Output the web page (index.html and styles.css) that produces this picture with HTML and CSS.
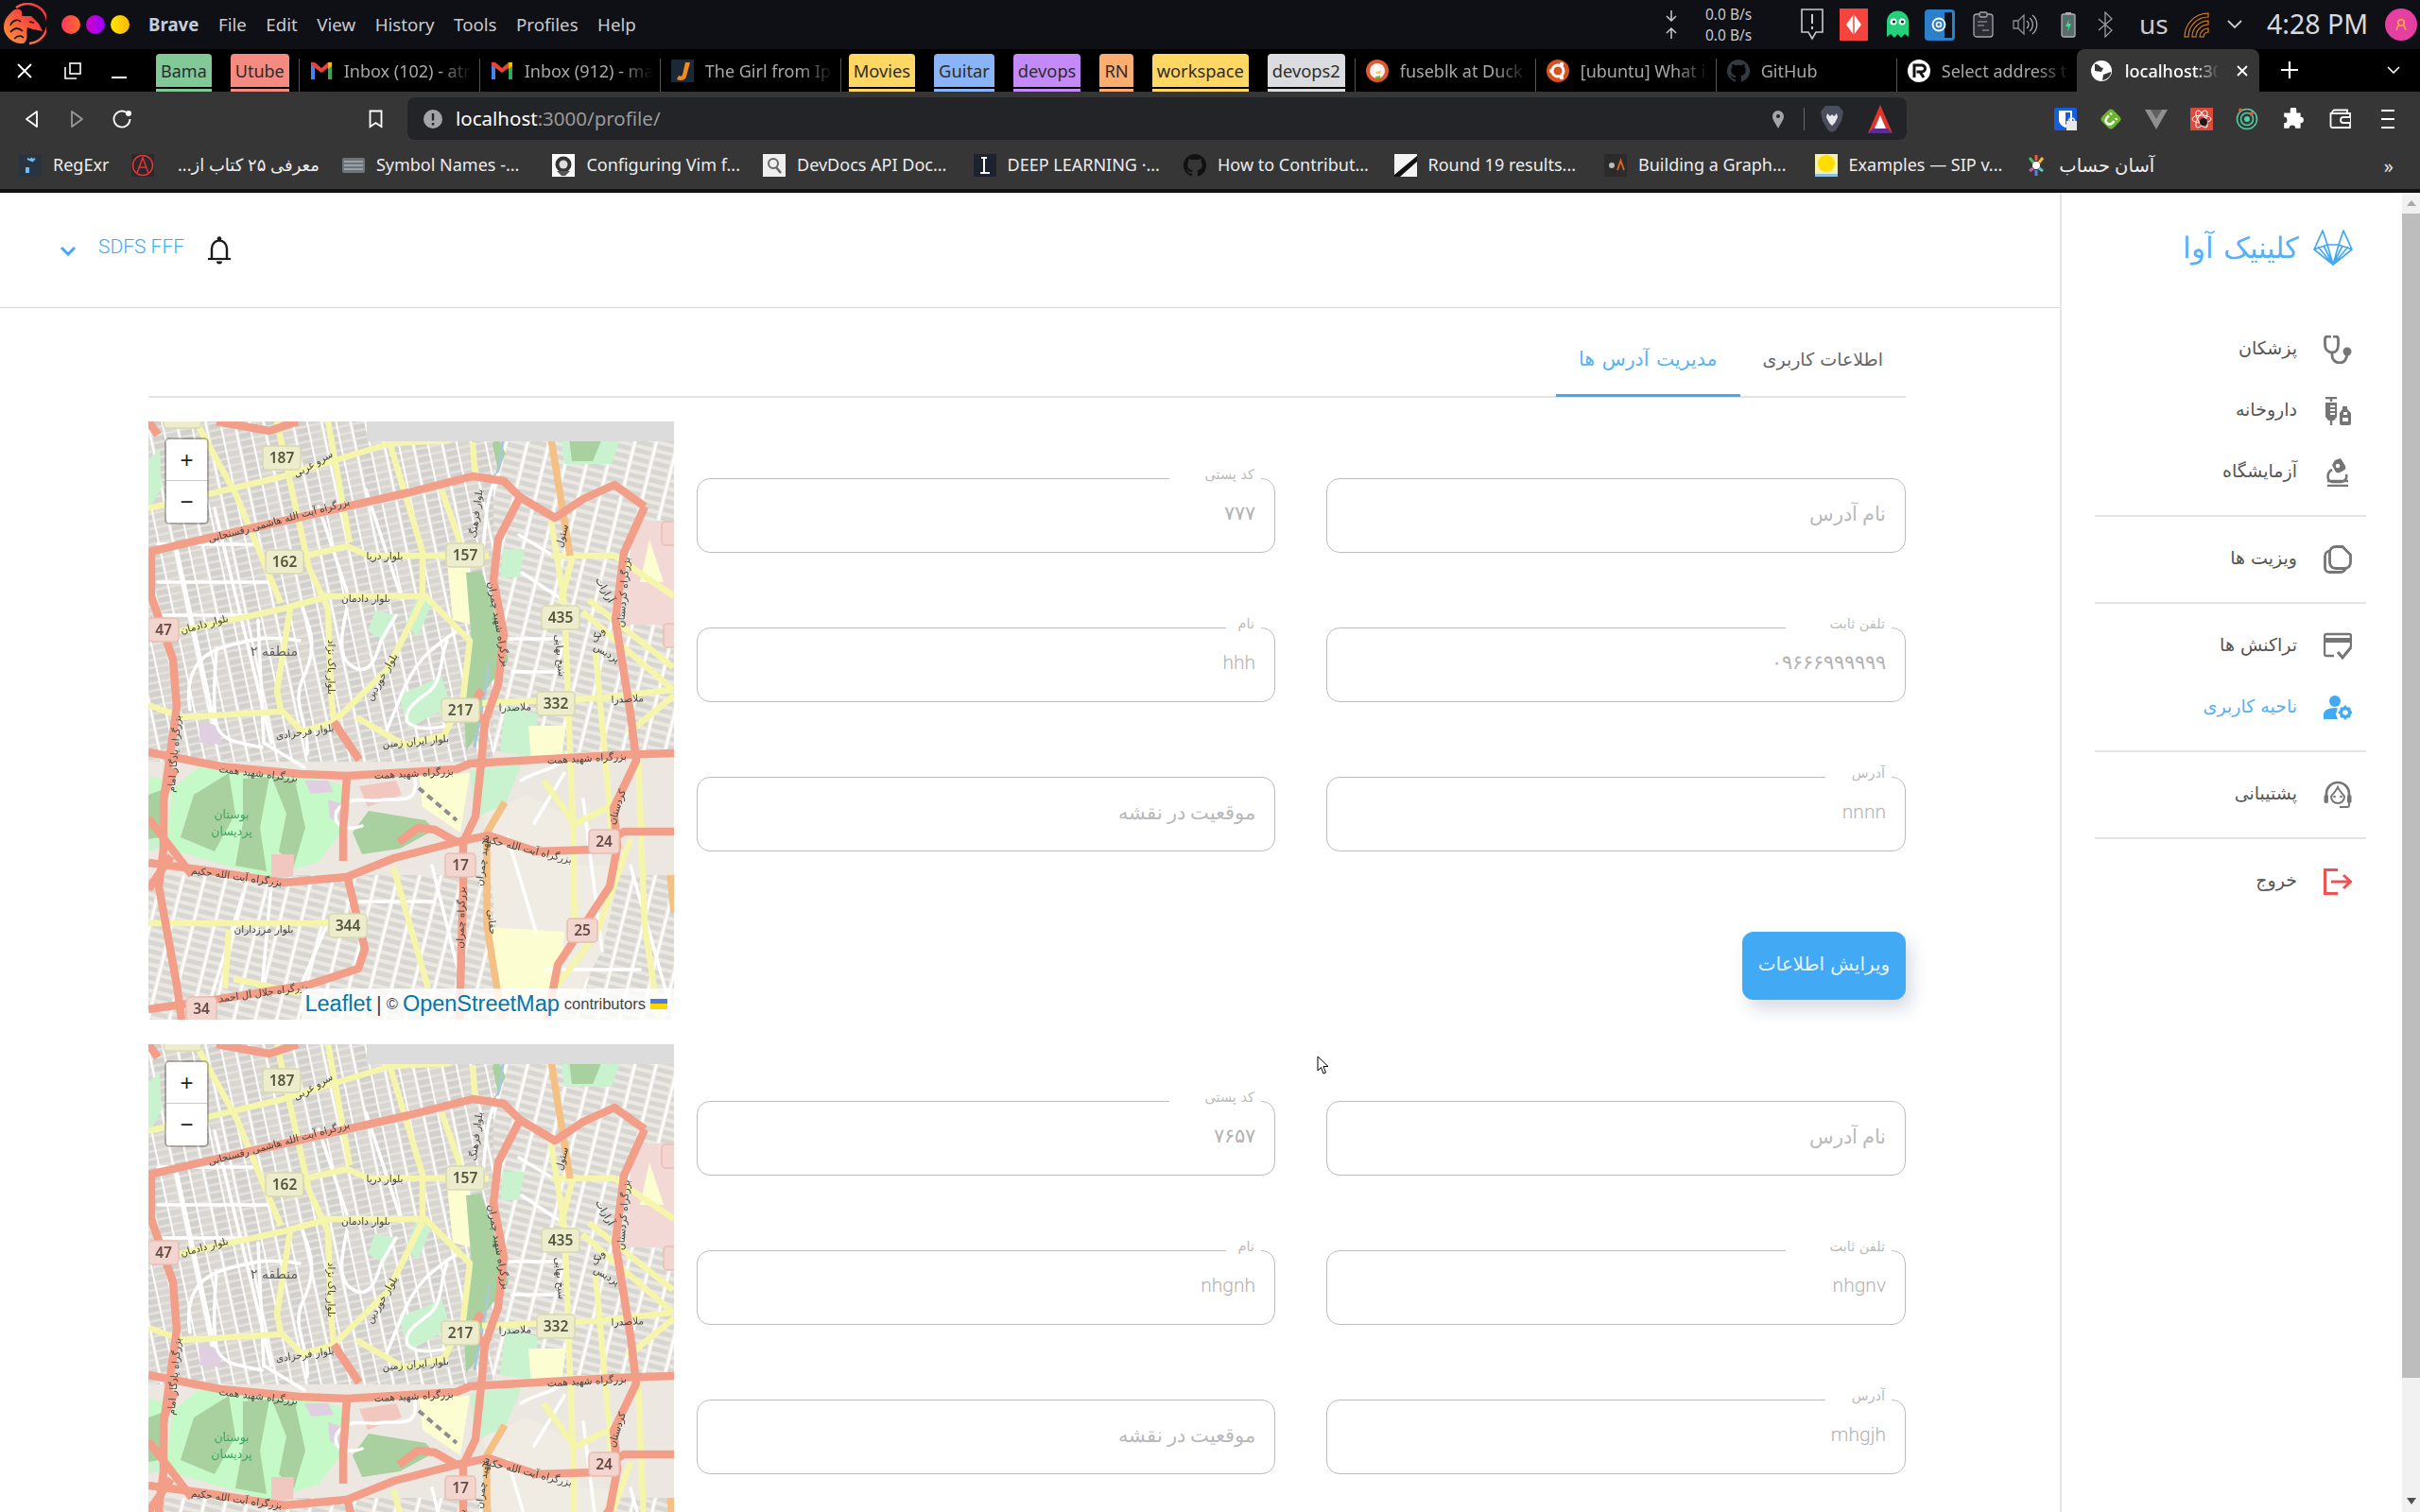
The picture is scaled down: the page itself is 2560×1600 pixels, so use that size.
FILE: index.html
```html
<!DOCTYPE html>
<html lang="en">
<head>
<meta charset="utf-8">
<title>localhost:3000/profile/</title>
<link rel="stylesheet" href="styles.css">
</head>
<body>
<svg class="defs" width="0" height="0" aria-hidden="true">
  <defs>
    <linearGradient id="dragon" x1="0" y1="1" x2="1" y2="0"><stop offset="0" stop-color="#ff9a3c"/><stop offset="1" stop-color="#f0203f"/></linearGradient>
    <pattern id="blocksA" width="30" height="8" patternUnits="userSpaceOnUse" patternTransform="rotate(-12)">
      <rect width="30" height="8" fill="#e6e3de"/>
      <rect x="1" y="1" width="12" height="5.5" fill="#d2d0cd"/>
      <rect x="15" y="1" width="12" height="5.5" fill="#d9d6d2"/>
      <rect x="13.2" width="1.8" height="8" fill="#fff"/>
      <rect x="28" width="2" height="8" fill="#fff"/>
    </pattern>
    <pattern id="blocksB" width="22" height="9" patternUnits="userSpaceOnUse" patternTransform="rotate(14)">
      <rect width="22" height="9" fill="#ebe8e2"/>
      <rect x="1" y="1" width="17" height="5" fill="#d8d6d2"/>
      <rect x="19.5" width="2.5" height="9" fill="#fff"/>
    </pattern>
    <symbol id="tehran" viewBox="0 0 556 633">
      <rect width="556" height="633" fill="#ece8e1"/>
      <rect width="365" height="360" fill="url(#blocksA)"/>
      <rect x="365" width="191" height="350" fill="url(#blocksB)"/>
      <rect y="480" width="556" height="153" fill="url(#blocksB)"/>
      <g class="land-green">
        <path d="M0,40 L12,30 L14,70 L0,95Z"/>
        <path d="M436,16 H500 L490,45 H440Z"/>
        <path d="M375,135 H398 L392,165 H372Z"/>
        <path d="M340,370 L395,362 L372,420 L345,415Z"/>
        <path d="M0,385 L22,395 L18,450 L0,455Z"/>
        <path d="M240,200 L262,205 L250,232 L232,222Z"/>
        <path d="M285,185 L300,192 L285,228 L272,215Z"/>
        <path d="M265,290 L310,270 L320,300 L275,325Z"/>
        <path d="M378,300 L412,310 L408,355 L372,350Z"/>
      </g>
      <path class="land-sand" d="M355,415 L400,395 L470,430 L430,520 L370,560Z"/>
      <path class="land-sand" d="M410,470 L500,470 L480,560 L440,633 L380,633Z"/>
      <path class="land-pink" d="M512,105 H556 V215 H505Z"/>
      <path class="land-pale" d="M530,125 L545,170 H520Z"/>
      <path class="land-pale" d="M316,150 H338 L342,215 L322,210Z"/>
      <path class="land-pale" d="M286,373 L340,372 L330,435 L290,408Z"/>
      <path class="land-pale" d="M402,322 H442 L436,362 H405Z"/>
      <path class="land-pale" d="M360,535 L440,540 L435,600 L375,610Z"/>
      <path class="land-park" d="M26,388 L53,366 L160,373 L206,385 L206,432 L180,466 L126,482 L30,455 L18,448Z"/>
      <path class="land-park" d="M0,375 L22,380 L16,445 L0,440Z"/>
      <g class="land-wood">
        <path d="M48,395 L85,372 L92,415 L70,455 L34,440Z"/>
        <path d="M100,378 L128,376 L118,430 L125,476 L92,470 L100,425Z"/>
        <path d="M130,375 L155,380 L166,430 L154,470 L138,455 L146,415Z"/>
        <path d="M216,435 L233,412 L293,422 L303,432 L266,452 L226,458Z"/>
        <path d="M0,395 L14,390 L12,440 L0,442Z"/>
        <path d="M336,160 L352,158 L362,186 L381,252 L356,285 L346,335 L336,348 L333,290 L342,235Z"/>
        <path d="M364,25 L368,15 L378,34 L370,52Z"/>
        <path d="M445,18 L480,18 L470,42 L448,42Z"/>
      </g>
      <path class="land-lilac" d="M165,380 H190 L196,392 L172,394Z"/>
      <path class="land-lilac" d="M190,400 L206,405 L204,425 L192,420Z"/>
      <path class="land-lilac" d="M53,320 H72 L78,342 L55,340Z"/>
      <path class="land-rose" d="M130,458 H154 L153,482 H130Z"/>
      <path class="land-rose" d="M223,386 L262,380 L268,395 L232,408Z"/>
      <path class="water" d="M378,12 C370,30 376,45 366,60"/>
      <path class="water" d="M360,255 C358,290 350,310 345,345"/>
      <path class="rail" d="M286,388 L326,422"/>
      <g class="street">
        <path d="M44,305 C38,268 52,246 82,238 S130,226 160,232"/>
        <path d="M72,240 C70,270 68,300 72,320 S100,340 120,345"/>
        <path d="M116,210 L122,340 L165,366"/>
        <path d="M163,198 C172,220 180,240 162,275 C152,300 170,320 168,352"/>
        <path d="M210,198 C204,225 200,248 214,258 S238,262 246,232 L262,205"/>
        <path d="M326,222 C300,240 284,250 268,288 L250,332"/>
        <path d="M316,232 C308,250 312,272 298,285 C280,298 270,306 274,318 C285,328 300,325 316,322"/>
        <path d="M199,413 C212,392 232,405 250,400 C272,400 285,402 282,378"/>
        <path d="M199,413 C194,432 216,432 226,428"/>
        <path d="M370,56 C355,80 358,110 352,150"/>
        <path d="M395,160 L440,190 M380,230 H436 M385,265 H440 M392,120 L425,140"/>
        <path d="M394,380 C420,365 430,372 444,350 M408,425 L440,372"/>
        <path d="M70,92 L130,340 M30,135 L70,320"/>
        <path d="M10,170 H130 M10,130 H110 M15,205 H120"/>
        <path d="M180,90 L210,180 M230,72 L268,188"/>
        <path d="M460,400 L480,560 M510,470 L556,633 M300,470 L340,630"/>
        <path d="M210,508 H300 M100,500 L60,630 M130,490 L120,600 M190,530 L160,600"/>
        <path d="M380,440 L410,540 M420,580 H520"/>
      </g>
      <g class="road-yellow">
        <path d="M50,0 L93,78 L140,192"/>
        <path d="M136,0 L150,65 L170,155 L190,198 L193,285 L196,318"/>
        <path d="M190,0 L213,128"/>
        <path d="M256,25 L290,138 V185"/>
        <path d="M310,72 L330,128"/>
        <path d="M343,22 L346,62"/>
        <path d="M0,92 L143,58 L256,23 L320,20"/>
        <path d="M166,142 L210,132 L233,142 H360"/>
        <path d="M33,222 L143,198 L190,185 H293 L340,232 L333,292 L313,332 L270,342 L220,313"/>
        <path d="M290,188 L253,262 L196,318"/>
        <path d="M150,198 L136,285 L140,305 L163,328 L196,318"/>
        <path d="M0,300 L36,313 L140,307"/>
        <path d="M353,298 L473,293 L555,284"/>
        <path d="M426,105 L440,192 L450,452 V500 L451,533"/>
        <path d="M449,142 L436,192"/>
        <path d="M426,142 H493 L556,185"/>
        <path d="M459,201 L555,284 M466,189 L555,260"/>
        <path d="M473,243 L488,409 L490,450"/>
        <path d="M518,355 L525,533 L540,633"/>
        <path d="M418,380 L451,426 L485,409"/>
        <path d="M259,471 L296,600"/>
        <path d="M0,531 H192"/>
        <path d="M85,538 L81,600"/>
        <path d="M90,590 L160,605"/>
        <path d="M510,442 L474,542 L430,600"/>
        <path d="M507,330 L556,290"/>
      </g>
      <g class="road-orange">
        <path d="M423,0 L446,142"/>
        <path d="M377,403 L358,435 L358,533 L374,633"/>
        <path d="M552,480 L556,520"/>
      </g>
      <g class="road-pink">
        <path d="M0,138 L113,112 L276,75 L343,58 L376,63 L393,80 L430,102 L460,82 L493,67 L525,90"/>
        <path d="M3,140 L3,185 L26,252 L30,302 L23,352 L16,402 L16,452 L11,492 L30,596 L35,633"/>
        <path d="M0,350 L76,365 L160,373 L210,375 L326,368 L340,362 L426,357 L493,353 L556,351"/>
        <path d="M196,318 L223,358"/>
        <path d="M0,467 L60,475 L143,488 L210,482 L260,462 L326,445 L360,438 L410,455 L473,453 L503,434 L556,434"/>
        <path d="M393,80 L370,125 L365,168 L376,225 L370,278 L356,318 L353,352 L346,418 L333,445 L333,492 L329,633"/>
        <path d="M353,285 C342,295 345,310 356,318"/>
        <path d="M210,375 L206,432 L206,465"/>
        <path d="M525,90 L503,139 L494,210 L510,309 L516,359 L492,409 L496,450 L488,492 L433,575 L422,633"/>
        <path d="M0,622 L70,612 L170,596 L222,579 L229,558 L211,484"/>
        <path d="M0,0 L10,14"/>
        <path d="M72,0 L128,10 L158,0"/>
        <path d="M0,420 L46,480"/>
        <path d="M28,368 L16,395 M24,460 L0,495"/>
        <path d="M265,445 L285,430 L303,432 L326,445"/>
      </g>
      <g class="road-name">
        <text transform="translate(139 108) rotate(-15)">بزرگراه آیت الله هاشمی رفسنجانی</text>
        <text transform="translate(176 48) rotate(-30)">سرو غربی</text>
        <text transform="translate(250 146)">بلوار دریا</text>
        <text transform="translate(230 191)">بلوار دادمان</text>
        <text transform="translate(60 218) rotate(-15)">بلوار دادمان</text>
        <text transform="translate(190 260) rotate(90)">بلوار پاک نژاد</text>
        <text transform="translate(250 272) rotate(-60)">بلوار خوردین</text>
        <text transform="translate(350 98) rotate(-82)">بلوار فرهنگ</text>
        <text transform="translate(367 215) rotate(80)">بزرگراه شهید چمران</text>
        <text transform="translate(166 332) rotate(-8)">بلوار فرحزادی</text>
        <text transform="translate(283 342) rotate(-5)">بلوار ایران زمین</text>
        <text transform="translate(388 306) rotate(-2)">ملاصدرا</text>
        <text transform="translate(116 376) rotate(7)">بزرگراه شهید همت</text>
        <text transform="translate(281 376) rotate(-3)">بزرگراه شهید همت</text>
        <text transform="translate(464 360) rotate(-3)">بزرگراه شهید همت</text>
        <text transform="translate(31 352) rotate(-85)">بزرگراه یادگار امام</text>
        <text transform="translate(93 485) rotate(8)">بزرگراه آیت الله حکیم</text>
        <text transform="translate(400 456) rotate(14)">بزرگراه آیت الله حکیم</text>
        <text transform="translate(432 248) rotate(85)">شیخ بهایی</text>
        <text transform="translate(441 122) rotate(-75)">سئول</text>
        <text transform="translate(478 228) rotate(-50)">ونک</text>
        <text transform="translate(483 248) rotate(30)">پردیس</text>
        <text transform="translate(480 180) rotate(60)">آرارات</text>
        <text transform="translate(507 297) rotate(-3)">ملاصدرا</text>
        <text transform="translate(122 541)">بلوار مرزداران</text>
        <text transform="translate(122 608) rotate(-8)">بزرگراه جلال آل احمد</text>
        <text transform="translate(334 525) rotate(-88)">بزرگراه چمران</text>
        <text transform="translate(506 181) rotate(-85)">بزرگراه کردستان</text>
        <text transform="translate(499 409) rotate(-72)">کردستان</text>
        <text transform="translate(357 465) rotate(-82)">شهید چمران</text>
        <text transform="translate(360 530) rotate(85)">حقانی</text>
      </g>
      <text class="area-name" x="133" y="248">منطقه ۲</text>
      <text class="park-name" x="88" y="420">بوستان</text>
      <text class="park-name" x="88" y="438">پردیسان</text>
      <g class="shield-green">
        <rect x="121" y="26" width="40" height="25" rx="4"/><rect x="124" y="136" width="40" height="25" rx="4"/><rect x="315" y="129" width="40" height="25" rx="4"/><rect x="416" y="195" width="40" height="25" rx="4"/><rect x="310" y="293" width="40" height="25" rx="4"/><rect x="411" y="286" width="40" height="25" rx="4"/><rect x="191" y="521" width="40" height="25" rx="4"/><rect x="16" y="-18" width="40" height="25" rx="4"/>
      </g>
      <g class="shield-pink">
        <rect x="0" y="208" width="32" height="25" rx="4"/><rect x="314" y="457" width="32" height="25" rx="4"/><rect x="466" y="432" width="32" height="25" rx="4"/><rect x="443" y="526" width="32" height="25" rx="4"/><rect x="40" y="609" width="32" height="25" rx="4"/><rect x="543" y="106" width="32" height="25" rx="4"/><rect x="545" y="214" width="32" height="25" rx="4"/>
      </g>
      <g class="shield-text">
        <text x="141" y="44">187</text><text x="144" y="154">162</text><text x="335" y="147">157</text><text x="436" y="213">435</text><text x="330" y="311">217</text><text x="431" y="304">332</text><text x="211" y="539">344</text>
      </g>
      <g class="shield-text pink">
        <text x="16" y="226">47</text><text x="330" y="475">17</text><text x="482" y="450">24</text><text x="459" y="544">25</text><text x="56" y="627">34</text>
      </g>
      <rect class="tile-missing" x="231" width="325" height="21"/>
    </symbol>
  </defs>
</svg>

<header class="os-bar">
  <div class="os-left">
    <svg class="dragon" viewBox="0 0 46 46" aria-hidden="true">
      <path d="M14,5 A21,21 0 1 1 28,43" fill="none" stroke="url(#dragon)" stroke-width="2.5"/>
      <path d="M9,10 C16,3 22,8 20,14 L30,14 L38,22 L42,30 L32,28 L26,26 C24,32 28,38 22,43 C10,44 1,34 1,26 C1,18 5,14 9,10Z" fill="url(#dragon)"/>
      <path d="M8,24 C10,18 16,17 19,20 M8,31 C12,26 17,26 21,30 M12,38 C16,34 19,34 22,37 M28,20 L33,21" fill="none" stroke="#0e1016" stroke-width="1.6"/>
    </svg>
    <div class="traffic"><span class="dot dot-red"></span><span class="dot dot-purple"></span><span class="dot dot-yellow"></span></div>
    <nav class="os-menu"><b>Brave</b><span>File</span><span>Edit</span><span>View</span><span>History</span><span>Tools</span><span>Profiles</span><span>Help</span></nav>
  </div>
  <div class="tray">
    <div class="net">
      <svg class="net-arrows" viewBox="0 0 16 36" aria-hidden="true"><path d="M8,3 V14 M3,9 L8,14 L13,9 M8,33 V22 M3,27 L8,22 L13,27" fill="none" stroke="#c8cad0" stroke-width="1.5"/></svg>
      <div class="net-text"><span>0.0 B/s</span><span>0.0 B/s</span></div>
    </div>
    <svg class="tray-icon tray-msg" viewBox="0 0 28 36" aria-hidden="true"><path d="M3,2 H25 V26 H18 L14,33 L10,26 H3Z" fill="none" stroke="#c8cad0" stroke-width="1.6"/><path d="M14,7 V17 M14,20 V23" stroke="#c8cad0" stroke-width="2"/></svg>
    <svg class="tray-icon tray-red" viewBox="0 0 30 34" aria-hidden="true"><rect width="30" height="34" fill="#f5433d"/><path d="M15,6 L23,17 L15,28 L7,17Z" fill="#fff"/><path d="M15,6 V28" stroke="#f5433d" stroke-width="1.5"/></svg>
    <svg class="tray-icon tray-ghost" viewBox="0 0 25 30" aria-hidden="true"><path d="M1,28 V12 A11.500,11.500 0 0 1 24,12 V28 L20,25 L16,29 L12.500,25 L9,29 L5,25Z" fill="#25d07b"/><circle cx="8" cy="12" r="3.500" fill="#fff"/><circle cx="17" cy="12" r="3.500" fill="#fff"/><circle cx="8.500" cy="12" r="1.600" fill="#123"/><circle cx="17.500" cy="12" r="1.600" fill="#123"/></svg>
    <svg class="tray-icon tray-blue" viewBox="0 0 32 33" aria-hidden="true"><rect width="32" height="33" rx="4" fill="#2c7fc9"/><rect x="21" y="3" width="8" height="27" fill="#0e1016"/><circle cx="15" cy="16" r="6.500" fill="none" stroke="#fff" stroke-width="1.800"/><circle cx="15" cy="16" r="2.500" fill="none" stroke="#fff" stroke-width="1.500"/></svg>
    <svg class="tray-icon tray-clip" viewBox="0 0 22 28" aria-hidden="true"><rect x="1" y="3" width="20" height="24" rx="3" fill="#2a2c33" stroke="#a4a6ab" stroke-width="1.300"/><rect x="7" y="1" width="8" height="5" rx="1.500" fill="#2a2c33" stroke="#a4a6ab" stroke-width="1.300"/><path d="M5,11 H15 M5,15 H12 M10,20 H17" stroke="#a4a6ab" stroke-width="1.200"/></svg>
    <svg class="tray-icon tray-sound" viewBox="0 0 28 26" aria-hidden="true"><path d="M1,9 H6 V17 H1Z M6,9 L12,3 V23 L6,17" fill="none" stroke="#8e9096" stroke-width="1.300"/><path d="M15,9 A5,5 0 0 1 15,17 M18,6 A9,9 0 0 1 18,20 M21,3 A13,13 0 0 1 21,23" fill="none" stroke="#a8aaaf" stroke-width="1.300"/></svg>
    <svg class="tray-icon tray-batt" viewBox="0 0 16 28" aria-hidden="true"><rect x="1" y="3" width="14" height="24" rx="2" fill="#5a6c6a" stroke="#b0b2b6" stroke-width="1.300"/><rect x="5" y="1" width="6" height="2" fill="#b0b2b6"/><path d="M9,8 L5,16 H8 L7,22 L11,13 H8Z" fill="#2fe88e"/></svg>
    <svg class="tray-icon tray-batt" viewBox="0 0 16 28" aria-hidden="true"><path d="M1,8 L15,20 L8,27 V1 L15,8 L1,20" fill="none" stroke="#9a9ca2" stroke-width="1.300"/></svg>
    <span class="tray-lang">us</span>
    <svg class="tray-icon tray-wifi" viewBox="0 0 28 28" aria-hidden="true"><path d="M2,27 A25,25 0 0 1 27,2 V6 A21,21 0 0 0 6,27Z M10,27 A17,17 0 0 1 27,10 V14 A13,13 0 0 0 14,27Z M18,27 A9,9 0 0 1 27,18 V22 A5,5 0 0 0 22,27Z" fill="none" stroke="#e8871e" stroke-width="1.100"/></svg>
    <svg class="tray-icon tray-chev" viewBox="0 0 18 12" aria-hidden="true"><path d="M2,2 L9,9 L16,2" fill="none" stroke="#c8cad0" stroke-width="1.800"/></svg>
    <span class="tray-time">4:28 PM</span>
    <svg class="tray-icon tray-avatar" viewBox="0 0 34 34" aria-hidden="true"><circle cx="17" cy="17" r="17" fill="#e63fa2"/><circle cx="17" cy="15" r="3.200" fill="none" stroke="#f7b731" stroke-width="1.500"/><path d="M12,23 L14,18 M22,23 L20,18" stroke="#f7b731" stroke-width="1.500"/></svg>
  </div>
</header>

<div class="tabstrip">
  <div class="win-controls">
    <svg viewBox="0 0 16 16" class="win-close" aria-hidden="true"><path d="M1,1 L15,15 M15,1 L1,15" stroke="#fff" stroke-width="1.800"/></svg>
    <svg viewBox="0 0 18 18" class="win-max" aria-hidden="true"><rect x="6" y="1" width="11" height="11" fill="none" stroke="#fff" stroke-width="1.600"/><path d="M1,5 V17 H13" fill="none" stroke="#fff" stroke-width="1.600"/></svg>
    <svg viewBox="0 0 16 3" class="win-min" aria-hidden="true"><rect width="16" height="2" fill="#fff"/></svg>
  </div>
  <span class="pill pill-green">Bama</span>
  <span class="pill pill-red">Utube</span>
  <div class="tab"><svg class="fav" viewBox="0 0 24 18" aria-hidden="true"><path d="M1,18 V3 L5,1 V18Z" fill="#4285f4"/><path d="M19,18 V1 L23,3 V18Z" fill="#34a853"/><path d="M1,3 L12,11 L23,3 V0 L19,0 L12,6 L5,0 L1,0Z" fill="#ea4335"/><path d="M19,0 H23 V4 L19,7Z" fill="#fbbc04"/></svg><span class="tab-title">Inbox (102) - atr</span></div>
  <div class="tab"><svg class="fav" viewBox="0 0 24 18" aria-hidden="true"><path d="M1,18 V3 L5,1 V18Z" fill="#4285f4"/><path d="M19,18 V1 L23,3 V18Z" fill="#34a853"/><path d="M1,3 L12,11 L23,3 V0 L19,0 L12,6 L5,0 L1,0Z" fill="#ea4335"/><path d="M19,0 H23 V4 L19,7Z" fill="#fbbc04"/></svg><span class="tab-title">Inbox (912) - ma</span></div>
  <div class="tab"><svg class="fav" viewBox="0 0 24 24" aria-hidden="true"><rect width="24" height="24" fill="#1b2838"/><path d="M15,3 H20 L16,18 C15,22 10,23 6,21 L8,17 C10,18 11,18 12,16Z" fill="#f28c1e"/></svg><span class="tab-title">The Girl from Ip</span></div>
  <span class="tab-sep"></span>
  <span class="pill pill-yellow">Movies</span>
  <span class="pill pill-blue">Guitar</span>
  <span class="pill pill-purple">devops</span>
  <span class="pill pill-orange">RN</span>
  <span class="pill pill-yellow">workspace</span>
  <span class="pill pill-grey">devops2</span>
  <div class="tab"><svg class="fav" viewBox="0 0 24 24" aria-hidden="true"><circle cx="12" cy="12" r="12" fill="#de5833"/><circle cx="12" cy="12" r="8" fill="#f4f0ea"/><path d="M9,7 C13,6 15,9 14,12 L15,20 H10 L9,12Z" fill="#fff"/><path d="M10,13 L16,12 L15,15 L11,15Z" fill="#fc3"/><path d="M10,18 L15,17 V20 H10Z" fill="#6b3"/></svg><span class="tab-title">fuseblk at Duck</span></div>
  <div class="tab"><svg class="fav" viewBox="0 0 24 24" aria-hidden="true"><circle cx="12" cy="12" r="12" fill="#d9521e"/><circle cx="12" cy="12" r="6" fill="none" stroke="#fff" stroke-width="3"/><circle cx="5" cy="12" r="2.200" fill="#fff"/><circle cx="16" cy="5" r="2.200" fill="#fff"/><circle cx="16" cy="19" r="2.200" fill="#fff"/></svg><span class="tab-title">[ubuntu] What i</span></div>
  <div class="tab"><svg class="fav" viewBox="0 0 24 24" aria-hidden="true"><path fill="#333a40" d="M12,0 A12,12 0 0 0 8.200,23.400 C8.800,23.500 9,23.100 9,22.800 V20.700 C5.700,21.400 5,19.100 5,19.100 C4.400,17.700 3.600,17.300 3.600,17.300 C2.500,16.600 3.700,16.600 3.700,16.600 C4.900,16.700 5.500,17.800 5.500,17.800 C6.600,19.600 8.300,19.100 9,18.800 C9.100,18 9.400,17.500 9.800,17.200 C7.100,16.900 4.300,15.900 4.300,11.300 C4.300,10 4.800,8.900 5.500,8.100 C5.400,7.800 5,6.600 5.600,4.900 C5.600,4.900 6.600,4.600 9,6.200 A11.500,11.500 0 0 1 15,6.200 C17.300,4.600 18.300,4.900 18.300,4.900 C19,6.600 18.600,7.800 18.400,8.100 C19.200,8.900 19.700,10 19.700,11.300 C19.700,15.900 16.900,16.900 14.200,17.200 C14.600,17.600 15,18.300 15,19.400 V22.800 C15,23.100 15.200,23.500 15.800,23.400 A12,12 0 0 0 12,0Z"/></svg><span class="tab-title">GitHub</span></div>
  <div class="tab"><svg class="fav" viewBox="0 0 24 24" aria-hidden="true"><circle cx="12" cy="12" r="12" fill="#fff"/><path d="M7,19 V6 H15 A3.500,3.500 0 0 1 15,13 H9.500 M13,13 L17,19" fill="none" stroke="#111" stroke-width="3"/></svg><span class="tab-title">Select address t</span></div>
  <div class="tab-active"><svg class="fav" viewBox="0 0 24 24" aria-hidden="true"><circle cx="12" cy="12" r="11" fill="#fff"/><path d="M5,5 C9,4 10,9 14,9 L12,13 L5,12Z M13,22 L14,16 L22,13 C22,18 18,21 13,22Z" fill="#363636"/></svg><span class="tab-title active-title">localhost:30</span><svg class="tab-x" viewBox="0 0 12 12" aria-hidden="true"><path d="M1,1 L11,11 M11,1 L1,11" stroke="#fff" stroke-width="1.800"/></svg></div>
  <svg class="tab-plus" viewBox="0 0 18 18" aria-hidden="true"><path d="M9,0 V18 M0,9 H18" stroke="#fff" stroke-width="2.200"/></svg>
  <svg class="tab-more" viewBox="0 0 14 8" aria-hidden="true"><path d="M1,1 L7,7 L13,1" fill="none" stroke="#fff" stroke-width="1.600"/></svg>
</div>

<div class="toolbar">
  <svg class="tool" viewBox="0 0 15 20" aria-hidden="true"><path d="M13,2 V18 L2,10Z" fill="none" stroke="#fff" stroke-width="1.800" stroke-linejoin="round"/></svg>
  <svg class="tool" viewBox="0 0 15 20" aria-hidden="true"><path d="M2,2 V18 L13,10Z" fill="none" stroke="#9a9a9a" stroke-width="1.800" stroke-linejoin="round"/></svg>
  <svg class="tool tool-wide" viewBox="0 0 20 20" aria-hidden="true"><path d="M16,4 A8.500,8.500 0 1 0 18.500,10" fill="none" stroke="#fff" stroke-width="1.800"/><circle cx="17" cy="4" r="3" fill="#fff"/></svg>
  <svg class="tool" viewBox="0 0 15 20" aria-hidden="true"><path d="M1.500,1.500 H13.500 V18 L7.500,14 L1.500,18Z" fill="none" stroke="#fff" stroke-width="1.800"/></svg>
  <div class="omnibox">
    <svg class="omni-warn" viewBox="0 0 20 20" aria-hidden="true"><circle cx="10" cy="10" r="10" fill="#a2a4a8"/><path d="M10,4 V11.500 M10,14 V16.500" stroke="#232427" stroke-width="2.400"/></svg>
    <span class="url"><b>localhost</b>:3000/profile/</span>
    <svg class="omni-pin" viewBox="0 0 14 20" aria-hidden="true"><path d="M7,20 C4,14 1,11 1,7 A6,6 0 0 1 13,7 C13,11 10,14 7,20Z" fill="#a2a4a8"/><circle cx="7" cy="7" r="2" fill="#232427"/></svg>
    <span class="omni-sep"></span>
    <svg class="omni-lion" viewBox="0 0 24 28" aria-hidden="true"><path d="M5,0 H19 L24,6 L22,16 L16,26 L12,28 L8,26 L2,16 L0,6Z" fill="#4b4e5c"/><path d="M7,8 L10,11 L12,9 L14,11 L17,8 L18,12 L15,18 L12,21 L9,18 L6,12Z" fill="#e7e7ec"/></svg>
    <svg class="omni-tri" viewBox="0 0 26 30" aria-hidden="true"><path d="M13,0 L26,30 H0Z" fill="#e2342f"/><path d="M5,25 H21 L26,30 H0Z" fill="#5a2d91"/><path d="M13,11 L19,25 H7Z" fill="#fff"/></svg>
  </div>
  <span class="tool-spacer"></span>
  <svg class="ext" viewBox="0 0 24 24" aria-hidden="true"><rect width="24" height="24" rx="2" fill="#175ddc"/><path d="M5,3 H19 V13 C19,17 15,20 12,21 C9,20 5,17 5,13Z M12,5 V18 C14,17 17,15 17,12 V5Z" fill="#fff" fill-rule="evenodd"/><rect x="13" y="14" width="11" height="10" fill="#e8e8e8"/><path d="M15.500,14 A3,3 0 0 1 21.500,14" fill="none" stroke="#e8e8e8" stroke-width="1.500"/></svg>
  <svg class="ext" viewBox="0 0 24 24" aria-hidden="true"><rect x="3.500" y="3.500" width="17" height="17" rx="4" transform="rotate(45 12 12)" fill="#6bb52d"/><path d="M8,11 V14 A4,4 0 0 0 16,14 V11 M8,9 V7 M16,9 V7" transform="rotate(45 12 12)" fill="none" stroke="#fff" stroke-width="2.500"/></svg>
  <svg class="ext" viewBox="0 0 24 24" aria-hidden="true"><path d="M0,2 H24 L12,23Z" fill="#8f8f8f"/><path d="M6,2 H18 L12,12Z" fill="#5f5f5f"/></svg>
  <svg class="ext" viewBox="0 0 24 24" aria-hidden="true"><rect width="24" height="24" fill="#dd4a3c"/><g fill="none" stroke="#fff" stroke-width="1"><ellipse cx="12" cy="12" rx="10" ry="4"/><ellipse cx="12" cy="12" rx="10" ry="4" transform="rotate(60 12 12)"/><ellipse cx="12" cy="12" rx="10" ry="4" transform="rotate(120 12 12)"/></g><circle cx="14" cy="15" r="4" fill="#1a1a1a"/></svg>
  <svg class="ext" viewBox="0 0 24 24" aria-hidden="true"><circle cx="12" cy="12" r="10.500" fill="none" stroke="#4fd1a5" stroke-width="1.500"/><circle cx="12" cy="12" r="6.500" fill="none" stroke="#4fd1a5" stroke-width="1.500"/><circle cx="12" cy="12" r="3" fill="#4fd1a5"/><circle cx="5" cy="2.500" r="2" fill="#e8582c"/><circle cx="17" cy="6" r="2" fill="#e8582c"/></svg>
  <svg class="ext" viewBox="0 0 22 22" aria-hidden="true"><path d="M8,2 A3,3 0 0 1 14,2 V5 H18 V9 A3,3 0 0 1 18,15 V20 H13 A3,3 0 0 0 7,20 H2 V15 A3,3 0 0 0 2,9 V5 H8Z" fill="#fff"/></svg>
  <svg class="ext" viewBox="0 0 24 22" aria-hidden="true"><path d="M3,5 C3,3 4,1.500 6,1.500 H19 V5 M1.500,5 H22 V20 H3 C2,20 1.500,19 1.500,18Z" fill="none" stroke="#fff" stroke-width="1.800"/><path d="M22,9 H15 A3,3 0 0 0 15,15 H22" fill="#363636" stroke="#fff" stroke-width="1.800"/></svg>
  <svg class="ext ext-menu" viewBox="0 0 14 20" aria-hidden="true"><path d="M0,1 H14 M0,10 H14 M0,19 H14" stroke="#fff" stroke-width="2"/></svg>
</div>

<nav class="bookmarks">
  <a class="bm bm-auto"><svg viewBox="0 0 24 24" aria-hidden="true"><rect width="24" height="24" fill="#2a3340"/><path d="M13,4 L15,8 M17,5 L13,7 M9,5 L14,7" stroke="#6cc0ef" stroke-width="2"/><rect x="7" y="14" width="4" height="6" fill="#6cc0ef"/></svg><span>RegExr</span></a>
  <a class="bm"><svg viewBox="0 0 24 24" aria-hidden="true"><rect width="24" height="24" fill="#2a2a2a"/><circle cx="12" cy="12" r="10.500" fill="none" stroke="#e8333a" stroke-width="1.500"/><path d="M6,20 L12,4 L18,20 M8.500,14 H15.500" fill="none" stroke="#e8333a" stroke-width="1.500"/></svg><span dir="rtl">معرفی ۲۵ کتاب از...</span></a>
  <a class="bm"><svg viewBox="0 0 24 24" aria-hidden="true"><rect y="4" width="24" height="16" rx="2" fill="#6e7478"/><path d="M2,8 H22 M2,12 H22 M2,16 H22" stroke="#aab0b4" stroke-width="1.500"/></svg><span>Symbol Names -...</span></a>
  <a class="bm"><svg viewBox="0 0 24 24" aria-hidden="true"><rect width="24" height="24" fill="#fff"/><circle cx="12" cy="11" r="8.500" fill="#333"/><circle cx="12" cy="11" r="4.500" fill="#ddd"/><path d="M5,18 H19 L14,23 H10Z" fill="#555"/></svg><span>Configuring Vim f...</span></a>
  <a class="bm"><svg viewBox="0 0 24 24" aria-hidden="true"><rect width="24" height="24" fill="#eee"/><circle cx="11" cy="10" r="5" fill="none" stroke="#666" stroke-width="2"/><path d="M14,14 L19,20" stroke="#666" stroke-width="2.500"/></svg><span>DevDocs API Doc...</span></a>
  <a class="bm"><svg viewBox="0 0 24 24" aria-hidden="true"><rect width="24" height="24" fill="#1c2230"/><path d="M8,4 H14 M11,4 V20 M7,20 H17" stroke="#fff" stroke-width="2"/></svg><span>DEEP LEARNING ·...</span></a>
  <a class="bm"><svg viewBox="0 0 24 24" aria-hidden="true"><path fill="#111" d="M12,0 A12,12 0 0 0 8.200,23.400 C8.800,23.500 9,23.100 9,22.800 V20.700 C5.700,21.400 5,19.100 5,19.100 C4.400,17.700 3.600,17.300 3.600,17.300 C2.500,16.600 3.700,16.600 3.700,16.600 C4.900,16.700 5.500,17.800 5.500,17.800 C6.600,19.600 8.300,19.100 9,18.800 C9.100,18 9.400,17.500 9.800,17.200 C7.100,16.900 4.300,15.900 4.300,11.300 C4.300,10 4.800,8.900 5.500,8.100 C5.400,7.800 5,6.600 5.600,4.900 C5.600,4.900 6.600,4.600 9,6.200 A11.500,11.500 0 0 1 15,6.200 C17.300,4.600 18.300,4.900 18.300,4.900 C19,6.600 18.600,7.800 18.400,8.100 C19.200,8.900 19.700,10 19.700,11.300 C19.700,15.900 16.900,16.900 14.200,17.200 C14.600,17.600 15,18.300 15,19.400 V22.800 C15,23.100 15.200,23.500 15.800,23.400 A12,12 0 0 0 12,0Z"/></svg><span>How to Contribut...</span></a>
  <a class="bm"><svg viewBox="0 0 24 24" aria-hidden="true"><rect width="24" height="24" fill="#f4f4f4"/><path d="M0,22 L24,2 V8 L6,24 H0Z" fill="#111"/></svg><span>Round 19 results...</span></a>
  <a class="bm"><svg viewBox="0 0 24 24" aria-hidden="true"><rect width="24" height="24" fill="#2b2b2b"/><circle cx="8" cy="12" r="3" fill="#bbb"/><path d="M14,17 L17.500,7 L21,17" fill="none" stroke="#e25f22" stroke-width="2"/></svg><span>Building a Graph...</span></a>
  <a class="bm"><svg viewBox="0 0 24 24" aria-hidden="true"><rect width="24" height="24" fill="#f5f0a8"/><circle cx="12" cy="10" r="9" fill="#ffdd00"/><rect y="21" width="24" height="3" fill="#8cc0e8"/></svg><span>Examples — SIP v...</span></a>
  <a class="bm bm-auto"><svg viewBox="0 0 24 24" aria-hidden="true"><circle cx="12" cy="12" r="4" fill="#fff"/><path d="M12,1 V7" stroke="#e54" stroke-width="3"/><path d="M19,4 L15,9" stroke="#fb3" stroke-width="3"/><path d="M5,4 L9,9" stroke="#5b5" stroke-width="3"/><path d="M12,17 V23" stroke="#58d" stroke-width="3"/><path d="M5,18 L9,15" stroke="#c5b" stroke-width="3"/><path d="M19,18 L15,15" stroke="#5cc" stroke-width="3"/></svg><span dir="rtl">آسان حساب</span></a>
  <span class="bm-more">»</span>
</nav>
<div class="chrome-edge"></div>

<div class="app">
  <main class="main">
    <header class="main-header">
      <svg class="chev" viewBox="0 0 18 11" aria-hidden="true"><path d="M2,2 L9,9 L16,2" fill="none" stroke="#42a9f5" stroke-width="3"/></svg>
      <span class="user-name">SDFS FFF</span>
      <svg class="bell" viewBox="0 0 24 30" aria-hidden="true"><path d="M4,23 V13 A8,8.500 0 0 1 20,13 V23" fill="none" stroke="#1b1b1b" stroke-width="2.400"/><path d="M0,24 H24" stroke="#1b1b1b" stroke-width="2.200"/><circle cx="12" cy="2.600" r="2.300" fill="#1b1b1b"/><path d="M9,26.500 H15 A3,3 0 0 1 9,26.500Z" fill="#1b1b1b"/></svg>
    </header>
    <div class="content" dir="rtl">
      <nav class="tabs">
        <a class="tab-link">اطلاعات کاربری</a>
        <a class="tab-link is-active">مدیریت آدرس ها</a>
      </nav>

      <section class="address">
        <div class="fields">
          <div class="field"><span class="field-text is-placeholder">نام آدرس</span></div>
          <fieldset class="field"><legend class="notch-s"><span>کد پستی</span></legend><span class="field-text">۷۷۷</span></fieldset>
          <fieldset class="field"><legend class="notch-m"><span>تلفن ثابت</span></legend><span class="field-text">۰۹۶۶۶۹۹۹۹۹۹</span></fieldset>
          <fieldset class="field"><legend class="notch-xs"><span>نام</span></legend><span class="field-text" dir="ltr">hhh</span></fieldset>
          <fieldset class="field"><legend class="notch-l"><span>آدرس</span></legend><span class="field-text" dir="ltr">nnnn</span></fieldset>
          <div class="field"><span class="field-text is-placeholder">موقعیت در نقشه</span></div>
          <button class="save" type="button">ویرایش اطلاعات</button>
        </div>
        <div class="map" dir="ltr">
          <svg class="map-art" viewBox="0 0 556 633" aria-hidden="true"><use href="#tehran"/></svg>
          <div class="zoom-box"><span class="zoom-btn">+</span><span class="zoom-btn">−</span></div>
          <div class="attribution"><a>Leaflet</a> <i>|</i> <small>©</small> <a>OpenStreetMap</a> <small>contributors</small> <span class="flag"></span></div>
        </div>
      </section>

      <section class="address">
        <div class="fields">
          <div class="field"><span class="field-text is-placeholder">نام آدرس</span></div>
          <fieldset class="field"><legend class="notch-s"><span>کد پستی</span></legend><span class="field-text">۷۶۵۷</span></fieldset>
          <fieldset class="field"><legend class="notch-m"><span>تلفن ثابت</span></legend><span class="field-text" dir="ltr">nhgnv</span></fieldset>
          <fieldset class="field"><legend class="notch-xs"><span>نام</span></legend><span class="field-text" dir="ltr">nhgnh</span></fieldset>
          <fieldset class="field"><legend class="notch-l"><span>آدرس</span></legend><span class="field-text" dir="ltr">mhgjh</span></fieldset>
          <div class="field"><span class="field-text is-placeholder">موقعیت در نقشه</span></div>
        </div>
        <div class="map" dir="ltr">
          <svg class="map-art" viewBox="0 0 556 633" aria-hidden="true"><use href="#tehran"/></svg>
          <div class="zoom-box"><span class="zoom-btn">+</span><span class="zoom-btn">−</span></div>
        </div>
      </section>
    </div>
    <svg class="cursor" viewBox="0 0 13 21" aria-hidden="true"><path d="M1,1 V16 L4.500,12.500 L7,19 L9.500,18 L7,11.500 H12Z" fill="#fff" stroke="#000" stroke-width="1"/></svg>
  </main>

  <aside class="sidebar" dir="rtl">
    <div class="brand">
      <svg class="brand-icon" viewBox="0 0 44 40" aria-hidden="true"><path d="M22,38 L2,22 L11,2 L16,17 H28 L33,2 L42,22Z M2,22 L16,17 M42,22 L28,17 M6,19 L22,38 L12,18 M38,19 L22,38 L32,18 M16,17 L22,38 L28,17" fill="none" stroke="#42a9f5" stroke-width="1.700" stroke-linejoin="round"/></svg>
      <span class="brand-name">کلینیک آوا</span>
    </div>
    <nav class="side-group">
      <a class="side-item"><svg viewBox="0 0 30 30" aria-hidden="true"><path d="M8,1 H4 C2.500,1 1.500,2 1.500,4 V10 C1.500,15 5,18 9,18 C13,18 15.500,15 15.500,10 V4 C15.500,2 14.500,1 13,1 H10" fill="none" stroke="#757575" stroke-width="2.800"/><path d="M9,18 V21 C9,26 13,29 17,29 C21,29 24,26 25,20" fill="none" stroke="#757575" stroke-width="2.800"/><circle cx="25" cy="17" r="4.500" fill="#757575"/></svg><span>پزشکان</span></a>
      <a class="side-item"><svg viewBox="0 0 30 30" aria-hidden="true"><path d="M2,1 H14 M8,1 V5 M8,25 V30" stroke="#757575" stroke-width="2.400"/><path d="M2,6 H14 V21 L11,25 H5 L2,21Z" fill="#757575"/><path d="M7,10 H12 M7,14 H12 M7,18 H12" stroke="#fff" stroke-width="1.800"/><path d="M20,10 H25 V13 L29,17 V28 A2,2 0 0 1 27,30 H19 A2,2 0 0 1 17,28 V17 L20,13Z" fill="#757575"/><rect x="20" y="22" width="6" height="4" fill="#fff"/><rect x="21" y="16" width="4" height="3" fill="#fff"/></svg><span>داروخانه</span></a>
      <a class="side-item"><svg viewBox="0 0 30 30" aria-hidden="true"><path d="M12,2 L18,0 L23,8 C24,10 23,12 21,13 L17,15 C15,16 13,15 12,13 L9,7 Z" fill="#757575"/><circle cx="15" cy="8" r="2.300" fill="#fff"/><path d="M9,12 C3,15 3,24 9,25 H19 C23,24 25,21 24,17" fill="none" stroke="#757575" stroke-width="2.600"/><path d="M4,24 H26 M4,29 H26" stroke="#757575" stroke-width="2.600"/></svg><span>آزمایشگاه</span></a>
    </nav>
    <hr class="side-rule">
    <nav class="side-group">
      <a class="side-item"><svg viewBox="0 0 30 30" aria-hidden="true"><path d="M6,6 C2,7 1.500,9 1.500,12 V23 C1.500,27 3,28.500 7,28.500 H17 C20,28.500 22,28 23,25" fill="none" stroke="#757575" stroke-width="2.800" stroke-linecap="round"/><path d="M13,1.500 H20 L28.500,10 V18 C28.500,22 26,24.500 22,24.500 H13 C9,24.500 6.500,22 6.500,18 V8 C6.500,4 9,1.500 13,1.500Z" fill="none" stroke="#757575" stroke-width="2.800"/></svg><span>ویزیت ها</span></a>
    </nav>
    <hr class="side-rule">
    <nav class="side-group">
      <a class="side-item"><svg viewBox="0 0 30 28" aria-hidden="true"><path d="M11,24 H3 C2,24 1,23 1,22 V3 C1,2 2,1 3,1 H27 C28,1 29,2 29,3 V15" fill="none" stroke="#757575" stroke-width="2.400"/><rect x="1" y="5" width="28" height="5" fill="#757575"/><path d="M15,20 L20,26 L29,15" fill="none" stroke="#757575" stroke-width="3"/></svg><span>تراکنش ها</span></a>
      <a class="side-item is-current"><svg viewBox="0 0 30 26" aria-hidden="true"><circle cx="12" cy="6" r="6" fill="#42a9f5"/><path d="M0,25 V20 C0,16 5,13 12,13 L15,13.500 L13,20 L15,25Z" fill="#42a9f5"/><circle cx="23" cy="18" r="4.500" fill="none" stroke="#42a9f5" stroke-width="3.500"/><path d="M23,10.500 V13 M23,23 V25.500 M15.500,18 H18 M28,18 H30 M18,13 L19.500,14.500 M26.500,21.500 L28,23 M18,23 L19.500,21.500 M26.500,14.500 L28,13" stroke="#42a9f5" stroke-width="2.600"/></svg><span>ناحیه کاربری</span></a>
    </nav>
    <hr class="side-rule">
    <nav class="side-group">
      <a class="side-item"><svg viewBox="0 0 30 28" aria-hidden="true"><path d="M3,17 V13 A12,12 0 0 1 27,13 V17" fill="none" stroke="#757575" stroke-width="2.600"/><path d="M8,16 C10,12 13,11 15,6 C17,11 20,12 22,16 C22,20 19,23 15,23 C11,23 8,20 8,16Z" fill="none" stroke="#757575" stroke-width="2"/><rect x="0.500" y="14" width="4.500" height="9" rx="2" fill="#757575"/><rect x="25" y="14" width="4.500" height="9" rx="2" fill="#757575"/><path d="M27,23 V25 C27,26.500 26,27 25,27 H17" fill="none" stroke="#757575" stroke-width="2"/><circle cx="11.500" cy="16" r="1.300" fill="#757575"/><circle cx="18.500" cy="16" r="1.300" fill="#757575"/></svg><span>پشتیبانی</span></a>
    </nav>
    <hr class="side-rule">
    <nav class="side-group">
      <a class="side-item"><svg viewBox="0 0 30 28" aria-hidden="true"><path d="M15,1.500 H1.500 V26.500 H15 M8,14 H28 M21,7 L28.500,14 L21,21" fill="none" stroke="#ee5253" stroke-width="3"/></svg><span>خروج</span></a>
    </nav>
  </aside>

  <div class="scrollbar">
    <span class="scroll-up"></span>
    <span class="scroll-thumb"></span>
    <span class="scroll-down"></span>
  </div>
</div>
</body>
</html>
```

FILE: styles.css
```css
* { box-sizing: border-box; }
html, body { margin: 0; padding: 0; height: 100%; }
body {
  width: 2560px;
  height: 1600px;
  overflow: hidden;
  background: #fff;
  font-family: "Noto Sans", "DejaVu Sans", sans-serif;
  display: flex;
  flex-direction: column;
}
.defs { position: absolute; }

/* desktop top bar */
.os-bar {
  height: 52px;
  flex: none;
  background: #0e1016;
  display: flex;
  justify-content: space-between;
  color: #c8cad0;
}
.os-left { display: flex; align-items: center; padding-left: 3px; }
.dragon { width: 46px; height: 46px; }
.traffic { display: flex; gap: 6px; margin-left: 16px; }
.dot { width: 20px; height: 20px; border-radius: 50%; }
.dot-red { background: linear-gradient(90deg, #ff3a5c, #ff6a2a); }
.dot-purple { background: linear-gradient(90deg, #d000c8, #9a00ff); }
.dot-yellow { background: linear-gradient(90deg, #ffe600, #ffb800); }
.os-menu { display: flex; gap: 20.500px; margin-left: 20px; font-size: 18.700px; margin-bottom: 2px; }
.os-menu b { font-weight: 700; color: #c9cbd0; }

.tray {
  display: grid;
  grid-template-columns: 143px 43px 49px 41px 51px 42px 51px 39px 44px 46px 46px 43px 125px 37px;
  align-items: center;
  justify-items: start;
  width: 800px;
}
.net { display: flex; align-items: center; gap: 28px; }
.net-arrows { width: 16px; height: 36px; }
.net-text { display: flex; flex-direction: column; font-size: 15.500px; line-height: 22px; }
.tray-msg { width: 28px; height: 36px; }
.tray-red { width: 30px; height: 34px; }
.tray-ghost { width: 25px; height: 30px; }
.tray-blue { width: 32px; height: 33px; }
.tray-clip { width: 22px; height: 28px; }
.tray-sound { width: 28px; height: 26px; }
.tray-batt { width: 16px; height: 28px; }
.tray-wifi { width: 28px; height: 28px; }
.tray-chev { width: 18px; height: 12px; }
.tray-avatar { width: 34px; height: 34px; }
.tray-lang { font-size: 28px; color: #c8cad0; margin-bottom: 2px; }
.tray-time { font-size: 28.500px; color: #d8dade; white-space: nowrap; margin-bottom: 2px; }

/* tab strip */
.tabstrip {
  height: 45px;
  flex: none;
  background: #000;
  display: flex;
  align-items: flex-end;
}
.win-controls {
  width: 165px;
  height: 45px;
  flex: none;
  display: flex;
  align-items: center;
  padding-left: 18px;
}
.win-close { width: 16px; height: 16px; }
.win-max { width: 18px; height: 18px; margin-left: 34px; }
.win-min { width: 16px; height: 3px; margin-left: 32px; margin-top: 16px; }
.pill {
  height: 40px;
  padding: 0 5px 5px;
  margin-right: 20px;
  display: flex;
  align-items: center;
  justify-content: center;
  border-radius: 4px 4px 0 0;
  font-size: 18.300px;
  color: #2c2c2c;
  flex: none;
  background: var(--pill);
  background-image: linear-gradient(transparent 35px, #000 35px, #000 37px, transparent 37px);
}
.pill-green { --pill: #81ca97; font-size: 18px; }
.pill-red { --pill: #f58a80; margin-right: 10px; font-size: 18px; }
.pill-yellow { --pill: #ffd762; }
.pill-blue { --pill: #8ab4f8; }
.pill-purple { --pill: #c58af9; }
.pill-orange { --pill: #fcad70; }
.pill-grey { --pill: #dadce0; margin-right: 10px; }
.tab {
  width: 191px;
  height: 45px;
  flex: none;
  display: flex;
  align-items: center;
  gap: 12px;
  padding-left: 12px;
  background: linear-gradient(#555, #555) left bottom / 1px 35px no-repeat;
  color: #a8a8a8;
  font-size: 18px;
  overflow: hidden;
  white-space: nowrap;
}
.tab-title {
  flex: 1;
  overflow: hidden;
  -webkit-mask-image: linear-gradient(90deg, #000 70%, transparent 95%);
  mask-image: linear-gradient(90deg, #000 70%, transparent 95%);
}
.tab-sep { width: 1px; height: 35px; background: #555; margin-right: 8px; flex: none; }
.fav { width: 24px; height: 24px; flex: none; }
.tab-active {
  width: 193px;
  height: 45px;
  flex: none;
  display: flex;
  align-items: center;
  padding: 0 12px 0 14px;
  gap: 13px;
  background: #363636;
  border-radius: 8px 8px 0 0;
  font-size: 18px;
  color: #fff;
  white-space: nowrap;
}
.tab-active .active-title { font-weight: 500; }
.tab-x { width: 12px; height: 12px; flex: none; }
.tab-plus { width: 18px; height: 18px; flex: none; margin: 0 0 14px 23px; }
.tab-more { width: 14px; height: 8px; flex: none; margin: 0 0 19px 94px; }

/* toolbar */
.toolbar {
  height: 61px;
  flex: none;
  background: #363636;
  padding: 0 0 4px 26px;
  display: grid;
  grid-template-columns: 48px 45px 271px 41px 1586px 156px 48px 48px 48px 48px 49px 50px 55px 40px;
  align-items: center;
  justify-items: start;
}
.tool { height: 20px; width: 15px; }
.tool-wide { width: 20px; }
.omnibox {
  width: 1586px;
  height: 45px;
  background: #232427;
  border-radius: 8px;
  display: flex;
  align-items: center;
  padding: 0 15px 0 17px;
}
.omni-warn { width: 20px; height: 20px; flex: none; }
.url { margin-left: 14px; font-size: 20.500px; color: #9a9a9a; margin-bottom: 2px; }
.url b { font-weight: 400; color: #fff; }
.omni-pin { width: 14px; height: 20px; margin-left: auto; }
.omni-sep { width: 1px; height: 24px; background: #666; margin-left: 20px; }
.omni-lion { width: 24px; height: 28px; margin-left: 17px; }
.omni-tri { width: 26px; height: 30px; margin-left: 26px; }
.ext { width: 24px; height: 24px; }
.ext-menu { width: 14px; height: 20px; }

/* bookmarks */
.bookmarks {
  height: 42px;
  flex: none;
  background: #363636;
  display: flex;
  align-items: center;
  padding: 0 0 8px 20px;
  gap: 24px;
}
.bm { display: flex; align-items: center; gap: 12px; color: #ededed; font-size: 18px; white-space: nowrap; flex: none; }
.bm svg { width: 24px; height: 24px; flex: none; }
.bm span { min-width: 162.500px; margin-bottom: 2px; }
.bm-auto span { min-width: 0; }
.bm-auto span[dir] { font-size: 19.500px; }
.bm-more { margin-left: auto; margin-right: 28px; color: #e4e4e4; font-size: 20px; }
.chrome-edge { height: 4px; flex: none; background: #121212; }

/* app */
.app { flex: 1; display: flex; min-height: 0; background: #fff; }
.main { flex: 1; min-width: 0; overflow: hidden; position: relative; }
.main-header {
  height: 122px;
  border-bottom: 1px solid #d6d6d6;
  display: flex;
  align-items: center;
  padding-left: 63px;
}
.chev { width: 18px; height: 11px; margin-top: 2px; }
.user-name { margin-left: 23px; font: 300 21px Roboto, sans-serif; color: #42a9f5; margin-bottom: 7px; }
.bell { width: 24px; height: 30px; margin-left: 25px; }

.content { padding: 0 163px 0 157px; font-family: "DejaVu Sans", sans-serif; }
.tabs {
  height: 95px;
  display: flex;
  align-items: flex-end;
  border-bottom: 2px solid #e4e4e4;
  margin-bottom: 25px;
}
.tab-link {
  height: 79px;
  margin-bottom: -1px;
  padding: 2px 24px 0;
  display: flex;
  align-items: center;
  font-size: 19px;
  color: #666;
  border-bottom: 3px solid transparent;
}
.tab-link.is-active { color: #55b2f6; border-bottom-color: #42a9f5; font-size: 20.500px; word-spacing: 1px; }

.address {
  display: grid;
  grid-template-columns: 1279px 556px;
  column-gap: 24px;
  height: 633px;
  margin-bottom: 26px;
}
.fields {
  display: grid;
  grid-template-columns: 613px 612px;
  column-gap: 54px;
  row-gap: 79px;
  align-content: start;
  padding-top: 60px;
}
.field {
  margin: 0;
  min-width: 0;
  height: 79px;
  padding: 0 20px;
  border: 1px solid #bdbdbd;
  border-radius: 14px;
  display: flex;
  align-items: center;
}
.field legend {
  height: 1px;
  line-height: 1px;
  font-size: 14.500px;
  color: #bbb;
  margin-right: -6px;
  padding: 0 7px 0 0;
  white-space: nowrap;
}
.field legend span { display: block; margin-top: -4px; }
.field legend.notch-xs { padding-left: 13px; }
.field legend.notch-s { padding-left: 37px; }
.field legend.notch-m { padding-left: 46px; }
.field legend.notch-l { padding-left: 28px; }
.field-text { font-size: 21px; font-weight: 300; color: #b3b3b3; margin-top: -6px; font-family: Roboto, "DejaVu Sans", sans-serif; }
.is-placeholder { color: #b9b9b9; margin-top: -4px; }
.save {
  grid-column: 1;
  justify-self: start;
  margin-top: 6px;
  width: 173px;
  height: 72px;
  padding: 0 0 5px;
  border: 0;
  border-radius: 12px;
  background: #42a9f5;
  color: #e4f3fe;
  font: 20px "DejaVu Sans", sans-serif;
  box-shadow: 6px 10px 18px rgba(70, 90, 130, .22);
}

.map { position: relative; height: 633px; overflow: hidden; }
.map-art { width: 556px; height: 633px; display: block; filter: blur(.4px); }
.land-green path { fill: #c9f3cf; }
.land-sand { fill: #f0ece4; }
.land-pink { fill: #f3d9d5; }
.land-pale { fill: #fdfdd2; }
.land-park { fill: #c5f9c8; }
.land-wood path { fill: #a9d09f; }
.land-lilac { fill: #dfcfe0; }
.land-rose { fill: #f2c7c0; }
.water { fill: none; stroke: #a9c8d8; stroke-width: 3; }
.rail { fill: none; stroke: #8d8d8d; stroke-width: 4; stroke-dasharray: 7 5; }
.street path { fill: none; stroke: #fff; stroke-width: 3.500; stroke-linecap: round; }
.road-yellow path { fill: none; stroke: #f5f5ac; stroke-width: 6.500; stroke-linejoin: round; }
.road-orange path { fill: none; stroke: #f5c083; stroke-width: 7.500; stroke-linejoin: round; }
.road-pink path { fill: none; stroke: #f29e88; stroke-width: 8.500; stroke-linejoin: round; }
.road-name text {
  font: 10.500px "DejaVu Sans", sans-serif;
  fill: #45453c;
  text-anchor: middle;
  direction: rtl;
}
.area-name { font: 14px "DejaVu Sans", sans-serif; fill: #5f5f5f; text-anchor: middle; direction: rtl; }
.park-name { font: 12.500px "DejaVu Sans", sans-serif; fill: #3da565; text-anchor: middle; direction: rtl; }
.shield-green rect { fill: #ededce; stroke: #d8d9ae; stroke-width: 1.500; }
.shield-pink rect { fill: #f2d5cf; stroke: #e8bdb3; stroke-width: 1.500; }
.shield-text text { font: 600 15.500px "Noto Sans", sans-serif; fill: #55563f; text-anchor: middle; }
.shield-text.pink text { fill: #6a4b44; }
.tile-missing { fill: #dcdcdc; }

.zoom-box {
  position: absolute;
  left: 17px;
  top: 17px;
  width: 47px;
  border: 2px solid rgba(0, 0, 0, .25);
  border-radius: 5px;
  background-clip: padding-box;
  display: flex;
  flex-direction: column;
}
.zoom-btn {
  height: 44px;
  background: #fff;
  display: flex;
  align-items: center;
  justify-content: center;
  font: 24px "Liberation Sans", sans-serif;
  color: #222;
}
.zoom-btn:first-child { border-bottom: 1px solid #ccc; border-radius: 3px 3px 0 0; }
.zoom-btn:last-child { border-radius: 0 0 3px 3px; }
.attribution {
  position: absolute;
  right: 0;
  bottom: 0;
  height: 33px;
  padding: 0 7px 0 3px;
  background: rgba(255, 255, 255, .8);
  display: flex;
  align-items: center;
  gap: 5px;
  font: 23.500px "Liberation Sans", sans-serif;
  color: #444;
  white-space: nowrap;
}
.attribution a { color: #0078a8; }
.attribution i { font-style: normal; font-size: 22px; }
.attribution small { font-size: 16.500px; }
.flag {
  width: 18px;
  height: 11px;
  background: linear-gradient(#4c7be0 50%, #ffd500 50%);
}
.cursor { position: absolute; left: 1393px; top: 913px; width: 13px; height: 21px; }

/* sidebar */
.sidebar {
  width: 362px;
  flex: none;
  border-left: 2px solid #e6e6e6;
  font-family: "DejaVu Sans", sans-serif;
  padding: 0 38px;
}
.brand {
  height: 133px;
  display: flex;
  align-items: center;
  gap: 14px;
  margin: 0 13px 0 0;
  padding-bottom: 18px;
}
.brand + .side-group { margin-bottom: 2px; }
.brand-icon { width: 44px; height: 40px; flex: none; }
.brand-name { font-size: 31px; font-weight: 300; color: #55b2f6; white-space: nowrap; }
.side-item {
  height: 65px;
  display: flex;
  align-items: center;
  gap: 28px;
  margin: 0 15px 0 0;
  color: #555;
  font-size: 19px;
}
.side-item svg { width: 30px; height: 30px; flex: none; }
.side-item span { margin-bottom: 4px; }
.side-item.is-current { color: #55b2f6; }
.side-rule {
  margin: 13px 0 12px;
  border: 0;
  height: 2px;
  background: #e4e4e4;
  width: 287px;
  margin-inline-end: auto;
}

.scrollbar {
  width: 19px;
  flex: none;
  background: #f1f1f1;
  display: flex;
  flex-direction: column;
}
.scroll-up, .scroll-down { height: 22px; flex: none; }
.scroll-up::after {
  content: "";
  display: block;
  margin: 8px auto 0;
  width: 0;
  border: 5px solid transparent;
  border-top: 0;
  border-bottom: 6px solid #a8a8a8;
}
.scroll-down { margin-top: auto; }
.scroll-down::after {
  content: "";
  display: block;
  margin: 7px auto 0;
  width: 0;
  border: 5px solid transparent;
  border-bottom: 0;
  border-top: 7px solid #505050;
}
.scroll-thumb { height: 1232px; background: #bdbdbd; flex: none; }
```
